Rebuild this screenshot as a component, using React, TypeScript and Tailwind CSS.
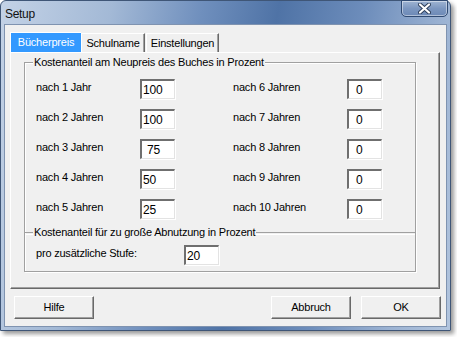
import React from 'react';

// Dialog "Setup" im Stil eines Windows-7-Fensters
const LEFT_ROWS = [
  { label: 'nach 1 Jahr', value: '100', pad: 'pl-[1px]' },
  { label: 'nach 2 Jahren', value: '100', pad: 'pl-[1px]' },
  { label: 'nach 3 Jahren', value: '75', pad: 'pl-[5px]' },
  { label: 'nach 4 Jahren', value: '50', pad: 'pl-[1px]' },
  { label: 'nach 5 Jahren', value: '25', pad: 'pl-[1px]' },
];

const RIGHT_ROWS = [
  { label: 'nach 6 Jahren', value: '0' },
  { label: 'nach 7 Jahren', value: '0' },
  { label: 'nach 8 Jahren', value: '0' },
  { label: 'nach 9 Jahren', value: '0' },
  { label: 'nach 10 Jahren', value: '0' },
];

const FONT = "font-['Liberation_Sans',Arial,sans-serif]";

function Field({ value, pad }: { value: string; pad: string }) {
  return (
    <div
      className={`w-[35px] h-[20px] bg-white border-t-2 border-l-2 border-b border-r border-t-[#6f6f6f] border-l-[#6f6f6f] border-b-[#e3e3e3] border-r-[#e3e3e3] shadow-[1px_1px_0_#ffffff] flex items-center text-[12px] leading-none text-black ${pad}`}
    >
      {value}
    </div>
  );
}

function Button({ children }: { children: React.ReactNode }) {
  return (
    <button className="w-[80px] h-[23px] bg-[#f0f0f0] border-t border-l border-white border-r border-b border-r-[#696969] border-b-[#696969] shadow-[inset_-1px_-1px_0_#a0a0a0] text-[11px] tracking-[-0.2px] text-black flex items-center justify-center">
      {children}
    </button>
  );
}

export default function App() {
  return (
    <div className={`w-[457px] h-[337px] bg-white ${FONT}`}>
      <div className="w-[451px] h-[331px] rounded-t-[6px] border border-[#3f5677] shadow-[3px_3px_4px_rgba(0,0,0,0.4)] bg-[linear-gradient(100deg,#c3d2e6_0%,#a3b9d6_22%,#6f8fbd_40%,#4f73a6_55%,#6d8dbb_72%,#9cb3d3_88%,#b2c5de_100%)] flex flex-col">
        {/* Titelleiste */}
        <div className="h-[23px] flex justify-between pl-[4px] pr-[2px]">
          <span className="text-[12px] tracking-[-0.3px] text-[#111] mt-[4px]">Setup</span>
          <div className="-mt-[1px] w-[47px] h-[17px] rounded-b-[5px] border border-[#2f4a72] shadow-[inset_0_0_0_1px_rgba(255,255,255,0.45)] bg-[linear-gradient(180deg,#9fb4d2_0%,#7c97c0_50%,#6c89b6_100%)] flex items-center justify-center">
            <svg width="13" height="11" viewBox="0 0 13 11">
              <path d="M2 1.5 L11 9.5 M11 1.5 L2 9.5" stroke="#2b3c57" strokeWidth="4" strokeLinecap="round" />
              <path d="M2 1.5 L11 9.5 M11 1.5 L2 9.5" stroke="#ffffff" strokeWidth="2.2" strokeLinecap="round" />
            </svg>
          </div>
        </div>

        {/* Client-Bereich */}
        <div className="flex-1 mx-[3px] mb-[3px] border border-[#7f93b0] bg-[#f0f0f0] flex flex-col pl-[5px] pr-[7px] pt-[8px] pb-[6px] text-[11px] tracking-[-0.2px] text-black">
          {/* Reiter */}
          <div className="flex items-end h-[19px]">
            <div className="w-[71px] h-[20px] bg-[#3399ff] text-white flex items-center justify-center border-t border-l border-white">
              Bücherpreis
            </div>
            <div className="w-[64px] h-[19px] border-t border-l border-white border-r border-r-[#696969] shadow-[inset_-1px_0_0_#a0a0a0] flex items-center justify-center">
              Schulname
            </div>
            <div className="ml-[1px] w-[73px] h-[19px] border-t border-l border-white border-r border-r-[#696969] shadow-[inset_-1px_0_0_#a0a0a0] flex items-center justify-center">
              Einstellungen
            </div>
          </div>

          {/* Reiterseite */}
          <div className="w-[430px] h-[237px] border-l border-t border-white border-r border-b border-r-[#696969] border-b-[#696969] shadow-[inset_-1px_-1px_0_#a0a0a0] pl-[13px] pt-[9px]">
            <div className="relative w-[392px] h-[210px] border border-[#a0a0a0] shadow-[inset_1px_1px_0_#ffffff,1px_1px_0_#ffffff] flex flex-col pt-[16px]">
              <span className="absolute left-[8px] -top-[8px] px-[1px] bg-[#f0f0f0] leading-[14px]">
                Kostenanteil am Neupreis des Buches in Prozent
              </span>

              <div className="flex flex-col gap-[10px]">
                {LEFT_ROWS.map((row, i) => (
                  <div key={row.label} className="flex h-[20px]">
                    <span className="w-[115px] pl-[11px] leading-[14px] mt-[1px]">{row.label}</span>
                    <Field value={row.value} pad={row.pad} />
                    <span className="w-[58px]" />
                    <span className="w-[114px] leading-[14px] mt-[1px]">{RIGHT_ROWS[i].label}</span>
                    <Field value={RIGHT_ROWS[i].value} pad="pl-[7px]" />
                  </div>
                ))}
              </div>

              <div className="relative mt-[13px] h-[2px] border-t border-[#a0a0a0] shadow-[0_1px_0_#ffffff]">
                <span className="absolute left-[8px] -top-[8px] px-[1px] bg-[#f0f0f0] leading-[14px]">
                  Kostenanteil für zu große Abnutzung in Prozent
                </span>
              </div>

              <div className="flex h-[20px] mt-[11px]">
                <span className="w-[159px] pl-[11px] leading-[14px] mt-[1px]">pro zusätzliche Stufe:</span>
                <Field value="20" pad="pl-[1px]" />
              </div>
            </div>
          </div>

          {/* Schaltflächen */}
          <div className="flex mt-[7px] pl-[4px] -mr-[2px]">
            <Button>Hilfe</Button>
            <div className="flex-1" />
            <Button>Abbruch</Button>
            <div className="w-[10px]" />
            <Button>OK</Button>
          </div>
        </div>
      </div>
    </div>
  );
}
